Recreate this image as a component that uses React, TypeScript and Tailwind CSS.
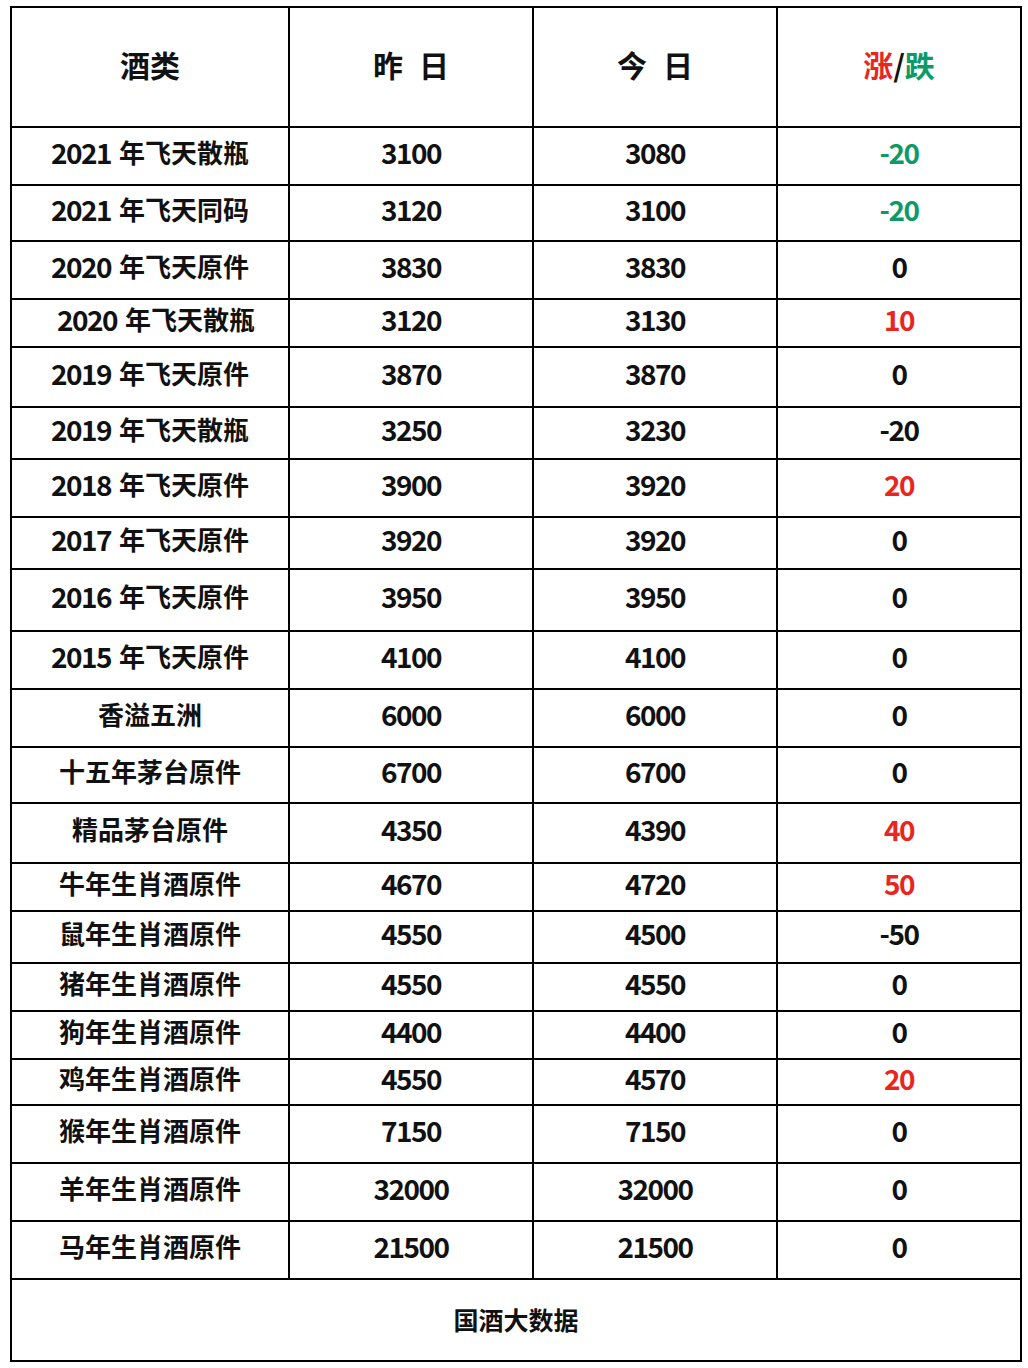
import React from "react";

type Row = {
  name: string;
  y: string;
  t: string;
  d: string;
  c: "red" | "green" | "black";
  h: string;
  nameCls?: string;
};

const rows: Row[] = [
  { name: "2021 年飞天散瓶", y: "3100", t: "3080", d: "-20", c: "green", h: "h-[58px]" },
  { name: "2021 年飞天同码", y: "3120", t: "3100", d: "-20", c: "green", h: "h-[56px]" },
  { name: "2020 年飞天原件", y: "3830", t: "3830", d: "0", c: "black", h: "h-[58px]" },
  { name: "2020 年飞天散瓶", y: "3120", t: "3130", d: "10", c: "red", h: "h-[48px]", nameCls: "pl-3" },
  { name: "2019 年飞天原件", y: "3870", t: "3870", d: "0", c: "black", h: "h-[60px]" },
  { name: "2019 年飞天散瓶", y: "3250", t: "3230", d: "-20", c: "black", h: "h-[52px]" },
  { name: "2018 年飞天原件", y: "3900", t: "3920", d: "20", c: "red", h: "h-[58px]" },
  { name: "2017 年飞天原件", y: "3920", t: "3920", d: "0", c: "black", h: "h-[52px]" },
  { name: "2016 年飞天原件", y: "3950", t: "3950", d: "0", c: "black", h: "h-[62px]" },
  { name: "2015 年飞天原件", y: "4100", t: "4100", d: "0", c: "black", h: "h-[58px]" },
  { name: "香溢五洲", y: "6000", t: "6000", d: "0", c: "black", h: "h-[58px]" },
  { name: "十五年茅台原件", y: "6700", t: "6700", d: "0", c: "black", h: "h-[56px]" },
  { name: "精品茅台原件", y: "4350", t: "4390", d: "40", c: "red", h: "h-[60px]" },
  { name: "牛年生肖酒原件", y: "4670", t: "4720", d: "50", c: "red", h: "h-[48px]" },
  { name: "鼠年生肖酒原件", y: "4550", t: "4500", d: "-50", c: "black", h: "h-[52px]" },
  { name: "猪年生肖酒原件", y: "4550", t: "4550", d: "0", c: "black", h: "h-[48px]" },
  { name: "狗年生肖酒原件", y: "4400", t: "4400", d: "0", c: "black", h: "h-[48px]" },
  { name: "鸡年生肖酒原件", y: "4550", t: "4570", d: "20", c: "red", h: "h-[46px]" },
  { name: "猴年生肖酒原件", y: "7150", t: "7150", d: "0", c: "black", h: "h-[58px]" },
  { name: "羊年生肖酒原件", y: "32000", t: "32000", d: "0", c: "black", h: "h-[58px]" },
  { name: "马年生肖酒原件", y: "21500", t: "21500", d: "0", c: "black", h: "h-[58px]" },
];

const colorCls = {
  red: "text-[#e8261f]",
  green: "text-[#0e9a68]",
  black: "text-[#111111]",
};

function splitName(name: string) {
  const m = name.match(/^(\d+)(\s*)(.*)$/);
  if (!m) return <span className="text-[26px] tracking-[0px]">{name}</span>;
  return (
    <>
      <span className="text-[28px] tracking-[-1.5px]">{m[1]}</span>
      <span className="w-[8px]" />
      <span className="text-[26px]">{m[3]}</span>
    </>
  );
}

export default function App() {
  return (
    <div className="w-[1028px] h-[1368px] bg-white font-['Noto_Sans_CJK_SC','Noto_Sans',sans-serif] font-bold text-[#111111]">
      <div className="pt-[6px] pl-[10px]">
        <div className="w-[1012px] h-[1356px] border-2 border-black flex flex-col">
          {/* header */}
          <div className="flex h-[120px] border-b-2 border-black shrink-0">
            <div className="w-[278px] border-r-2 border-black flex items-center justify-center text-[30px] pb-[6px]">
              酒类
            </div>
            <div className="w-[244px] border-r-2 border-black flex items-center justify-center text-[30px] pb-[6px]">
              昨<span className="w-[16px]" />日
            </div>
            <div className="w-[244px] border-r-2 border-black flex items-center justify-center text-[30px] pb-[6px]">
              今<span className="w-[16px]" />日
            </div>
            <div className="w-[242px] flex items-center justify-center text-[30px] pb-[6px]">
              <span className="text-[#e8261f]">涨</span>
              <span>/</span>
              <span className="text-[#0e9a68]">跌</span>
            </div>
          </div>
          {rows.map((r, i) => (
            <div key={i} className={`flex ${r.h} border-b-2 border-black shrink-0`}>
              <div
                className={`w-[278px] border-r-2 border-black flex items-center justify-center pb-[9px] ${r.nameCls ?? ""}`}
              >
                {splitName(r.name)}
              </div>
              <div className="w-[244px] border-r-2 border-black flex items-center justify-center pb-[9px] text-[28px] tracking-[-1.5px]">
                {r.y}
              </div>
              <div className="w-[244px] border-r-2 border-black flex items-center justify-center pb-[9px] text-[28px] tracking-[-1.5px]">
                {r.t}
              </div>
              <div
                className={`w-[242px] flex items-center justify-center pb-[9px] text-[28px] tracking-[-1.5px] ${colorCls[r.c]}`}
              >
                {r.d}
              </div>
            </div>
          ))}
          <div className="flex-1 flex items-center justify-center text-[25px]">
            国酒大数据
          </div>
        </div>
      </div>
    </div>
  );
}
